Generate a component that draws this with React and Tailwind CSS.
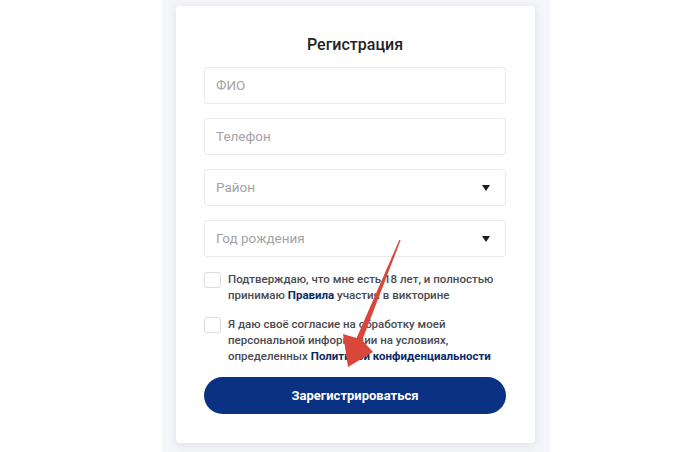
import React from 'react';

const font = { fontFamily: 'Roboto, "Noto Sans", sans-serif' };

function Caret() {
  return (
    <svg width="8" height="6" viewBox="0 0 8 6" className="shrink-0">
      <path d="M0 0 H8 L4 6 Z" fill="#1c1c1c" />
    </svg>
  );
}

function Field({ label, select = false }) {
  return (
    <div className="h-[37px] w-full rounded-[3px] border border-[#e9e9ec] bg-white flex items-center justify-between pl-[11px] pr-[15px]">
      <span className="text-[13.5px] text-[#a3a3a6]">{label}</span>
      {select && <Caret />}
    </div>
  );
}

function Check({ children }) {
  return (
    <div className="flex items-start gap-[7px]">
      <div className="mt-[1px] w-[17px] h-[16px] shrink-0 rounded-[3px] border border-[#dcdde2] bg-white"></div>
      <p className="text-[11.5px] leading-[16px] text-[#4a4a4f] font-medium whitespace-nowrap">{children}</p>
    </div>
  );
}

export default function App() {
  return (
    <div className="relative w-[700px] h-[452px] bg-white overflow-hidden" style={font}>
      <div className="ml-[162px] w-[388px] h-full bg-[#f4f5f9] pt-[6px] px-[14px]">
        <div className="w-[359px] rounded-[4px] bg-white shadow-[0_2px_8px_rgba(40,50,90,0.10)] pt-[27px] pb-[29px] pl-[28px] pr-[29px]">
          <h1 className="text-center text-[16px] leading-[24px] font-medium text-[#232326] mb-[10px]">Регистрация</h1>

          <div className="flex flex-col gap-[14px]">
            <Field label="ФИО" />
            <Field label="Телефон" />
            <Field label="Район" select />
            <Field label="Год рождения" select />
          </div>

          <div className="mt-[14px] flex flex-col gap-[13px]">
            <Check>
              Подтверждаю, что мне есть 18 лет, и полностью
              <br />
              принимаю <span className="font-bold text-[#0c2a66]">Правила</span> участия в викторине
            </Check>
            <Check>
              Я даю своё согласие на обработку моей
              <br />
              персональной информации на условиях,
              <br />
              определенных <span className="font-bold text-[#0c2a66]">Политикой конфиденциальности</span>
            </Check>
          </div>

          <button
            type="button"
            className="mt-[13px] h-[37px] w-full rounded-full bg-[#0b3282] text-white text-[13px] font-bold"
          >
            Зарегистрироваться
          </button>
        </div>
      </div>

      <svg className="absolute left-0 top-0 pointer-events-none" width="700" height="452" viewBox="0 0 700 452">
        <polygon
          points="399.4,239.7 356.6,338.1 343,334 348,367 373,352 362.2,340.3 400.6,240.3"
          fill="#d8473a"
        />
      </svg>
    </div>
  );
}
